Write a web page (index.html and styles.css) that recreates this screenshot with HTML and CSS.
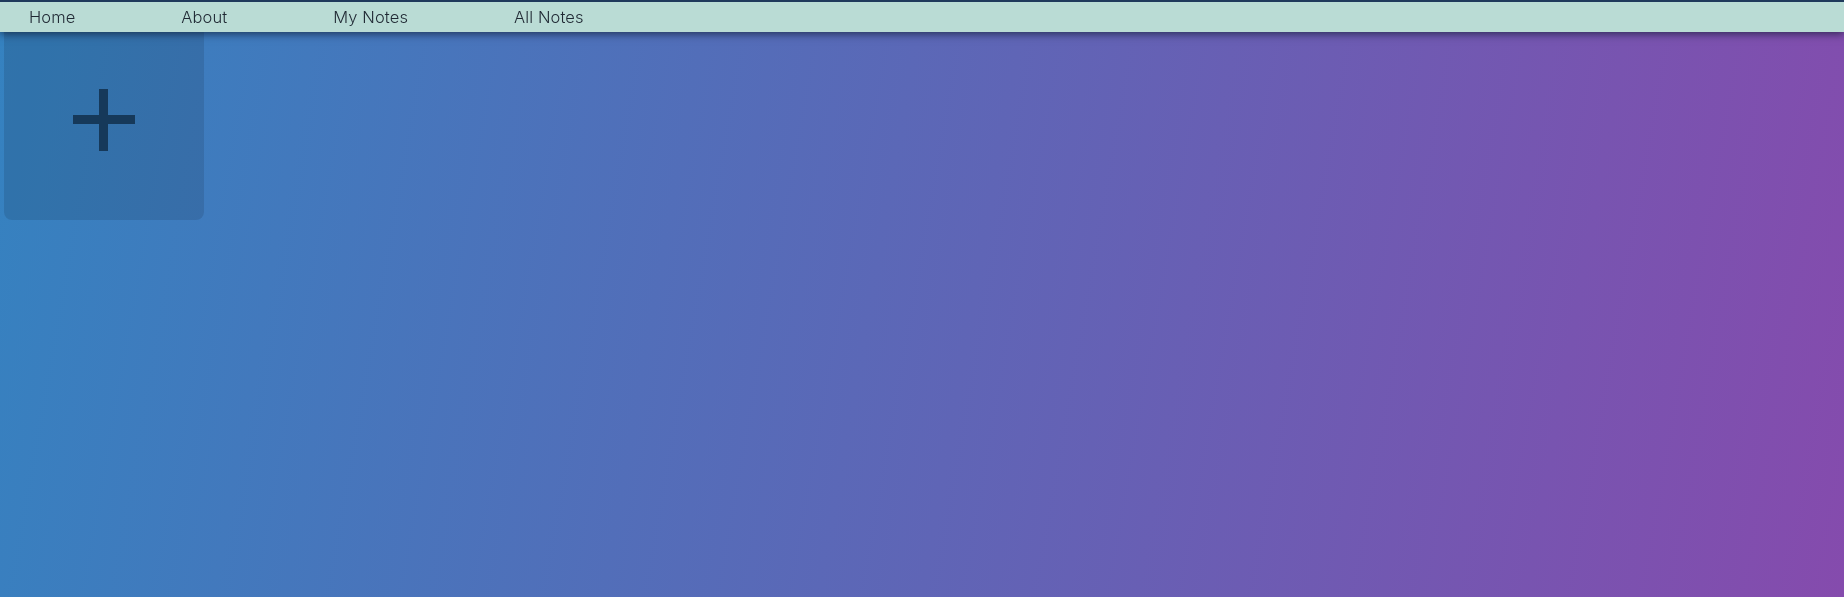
FILE: index.html
```html
<!DOCTYPE html>
<html>
<head>
<meta charset="utf-8">
<link rel="stylesheet" href="styles.css">
</head>
<body>
<nav class="nav">
  <a class="nav-link" href="#">Home</a>
  <a class="nav-link" href="#">About</a>
  <a class="nav-link" href="#">My Notes</a>
  <a class="nav-link" href="#">All Notes</a>
</nav>
<main class="main">
  <div class="add-card">
    <div class="plus"><span class="plus-h"></span><span class="plus-v"></span></div>
  </div>
</main>
</body>
</html>
```
FILE: styles.css
```css
html, body {
  margin: 0;
  padding: 0;
  height: 100%;
}
body {
  font-family: "Inter", "Open Sans", sans-serif;
  background: linear-gradient(100deg, #3582c0 0%, #854bad 100%);
  min-height: 597px;
}
.nav {
  position: fixed;
  top: 0;
  left: 0;
  right: 0;
  z-index: 10;
  height: 30px;
  border-top: 2px solid #1f3a5c;
  background: #badcd5;
  display: flex;
  align-items: center;
  gap: 106px;
  padding-left: 29px;
  box-shadow: 0 2px 8px rgba(10, 20, 40, 0.65);
}
.nav-link {
  color: #1f2833;
  text-decoration: none;
  font-size: 16.5px;
  font-weight: 300;
  letter-spacing: 0.1px;
}
.main {
  padding: 20px 4px;
}
.add-card {
  width: 200px;
  height: 200px;
  border-radius: 8px;
  background: rgba(0, 0, 0, 0.11);
  display: flex;
  align-items: center;
  justify-content: center;
}
.plus {
  position: relative;
  width: 62px;
  height: 62px;
}
.plus-h, .plus-v {
  position: absolute;
  background: #16395a;
}
.plus-h {
  left: 0;
  right: 0;
  top: 26px;
  height: 9px;
}
.plus-v {
  top: 0;
  bottom: 0;
  left: 26px;
  width: 9px;
}
```
